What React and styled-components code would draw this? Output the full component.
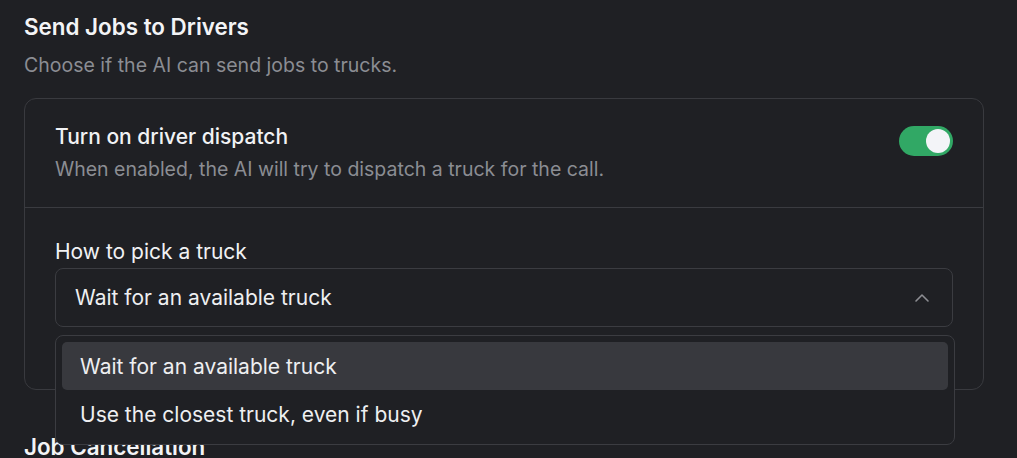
import React, { useState } from "react";
import styled, { createGlobalStyle } from "styled-components";
import { ChevronUp } from "lucide-react";

const GlobalStyle = createGlobalStyle`
  html, body {
    margin: 0;
    padding: 0;
    background: #1f2024;
    font-family: Inter, "Noto Sans", sans-serif;
    -webkit-font-smoothing: antialiased;
  }
`;

const Page = styled.div`
  padding: 14px 33px 0 24px;
  height: 458px;
  overflow: hidden;
  box-sizing: border-box;
`;

const Section = styled.section`
  margin-bottom: 44px;
`;

const SectionTitle = styled.h2`
  margin: 0;
  font-size: 22.4px;
  line-height: 26px;
  font-weight: 600;
  color: #f3f4f6;
`;

const SectionHint = styled.p`
  margin: 12px 0 20px;
  font-size: 19.5px;
  line-height: 26px;
  color: #8b8d93;
`;

const Card = styled.div`
  width: 960px;
  box-sizing: border-box;
  border: 1px solid #393a3f;
  border-radius: 12px;
  background: #1f2024;
`;

const Row = styled.div`
  display: flex;
  justify-content: space-between;
  align-items: flex-start;
  padding: ${(p) => p.$pad};
  & + & {
    border-top: 1.5px solid #3a3b40;
  }
`;

const RowText = styled.div`
  display: flex;
  flex-direction: column;
  gap: 5px;
`;

const RowTitle = styled.div`
  font-size: 21px;
  line-height: 28px;
  font-weight: 500;
  color: #f1f2f4;
`;

const RowHint = styled.div`
  font-size: 19.5px;
  line-height: 26px;
  color: #8b8d93;
`;

const Toggle = styled.button`
  margin-top: 3px;
  width: 54px;
  height: 30px;
  border: none;
  padding: 3px;
  border-radius: 15px;
  background: ${(p) => (p.$on ? "#31a865" : "#3a3b40")};
  display: flex;
  justify-content: ${(p) => (p.$on ? "flex-end" : "flex-start")};
  cursor: pointer;
`;

const Knob = styled.span`
  width: 24px;
  height: 24px;
  border-radius: 50%;
  background: #f3f4f8;
`;

const Field = styled.div`
  position: relative;
  display: flex;
  flex-direction: column;
  width: 100%;
`;

const FieldLabel = styled.label`
  font-size: 21px;
  line-height: 32px;
  color: #f1f2f4;
`;

const SelectButton = styled.button`
  height: 59px;
  width: 100%;
  box-sizing: border-box;
  display: flex;
  align-items: center;
  justify-content: space-between;
  padding: 0 18px 0 19px;
  background: #1f2024;
  border: 1px solid #3b3c41;
  border-radius: 8px;
  font-family: inherit;
  font-size: 21px;
  color: #eeeff1;
  cursor: pointer;

  svg {
    color: #8d8e93;
  }
`;

const Menu = styled.ul`
  position: absolute;
  top: calc(100% + 8px);
  left: 0;
  width: 900px;
  box-sizing: border-box;
  margin: 0;
  padding: 6px;
  list-style: none;
  background: #1f2024;
  border: 1px solid #3b3c41;
  border-radius: 8px;
  z-index: 10;
`;

const MenuItem = styled.li`
  height: 48px;
  display: flex;
  align-items: center;
  padding-left: 18px;
  border-radius: 5px;
  font-size: 21px;
  color: #eeeff1;
  background: ${(p) => (p.$active ? "#38393e" : "transparent")};
  cursor: pointer;
`;

const options = [
  "Wait for an available truck",
  "Use the closest truck, even if busy",
];

export default function App() {
  const [on, setOn] = useState(true);
  const [choice, setChoice] = useState(options[0]);
  const [open, setOpen] = useState(true);

  return (
    <>
      <GlobalStyle />
      <Page>
        <Section>
          <SectionTitle>Send Jobs to Drivers</SectionTitle>
          <SectionHint>Choose if the AI can send jobs to trucks.</SectionHint>
          <Card>
            <Row $pad="24px 30px 25px">
              <RowText>
                <RowTitle>Turn on driver dispatch</RowTitle>
                <RowHint>
                  When enabled, the AI will try to dispatch a truck for the call.
                </RowHint>
              </RowText>
              <Toggle $on={on} onClick={() => setOn(!on)}>
                <Knob />
              </Toggle>
            </Row>
            <Row $pad="28px 30px 62px">
              <Field>
                <FieldLabel>How to pick a truck</FieldLabel>
                <SelectButton onClick={() => setOpen(!open)}>
                  {choice}
                  <ChevronUp size={24} strokeWidth={1.6} />
                </SelectButton>
                {open && (
                  <Menu>
                    {options.map((o) => (
                      <MenuItem
                        key={o}
                        $active={o === choice}
                        onClick={() => {
                          setChoice(o);
                          setOpen(false);
                        }}
                      >
                        {o}
                      </MenuItem>
                    ))}
                  </Menu>
                )}
              </Field>
            </Row>
          </Card>
        </Section>
        <Section>
          <SectionTitle>Job Cancellation</SectionTitle>
        </Section>
      </Page>
    </>
  );
}
